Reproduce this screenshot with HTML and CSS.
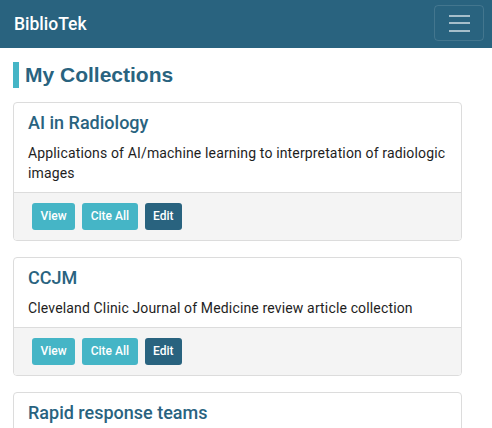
FILE: index.html
```html
<!DOCTYPE html>
<html>
<head>
<meta charset="utf-8">
<link rel="stylesheet" href="styles.css">
</head>
<body>
<nav class="navbar">
  <span class="brand">BiblioTek</span>
  <button class="toggler" aria-label="menu"><span class="bar"></span><span class="bar"></span><span class="bar"></span></button>
</nav>
<main class="container">
  <h1 class="page-title">My Collections</h1>
  <section class="card">
    <div class="card-body">
      <h2 class="card-title">AI in Radiology</h2>
      <p class="card-text">Applications of AI/machine learning to interpretation of radiologic images</p>
    </div>
    <div class="card-footer">
      <span class="btn btn-info">View</span>
      <span class="btn btn-info">Cite All</span>
      <span class="btn btn-dark">Edit</span>
    </div>
  </section>
  <section class="card">
    <div class="card-body">
      <h2 class="card-title">CCJM</h2>
      <p class="card-text">Cleveland Clinic Journal of Medicine review article collection</p>
    </div>
    <div class="card-footer">
      <span class="btn btn-info">View</span>
      <span class="btn btn-info">Cite All</span>
      <span class="btn btn-dark">Edit</span>
    </div>
  </section>
  <section class="card">
    <div class="card-body">
      <h2 class="card-title">Rapid response teams</h2>
      <p class="card-text">Rapid response team literature</p>
    </div>
  </section>
</main>
</body>
</html>
```
FILE: styles.css
```css
* { box-sizing: border-box; }
html, body { margin: 0; padding: 0; }
body {
  font-family: Roboto, "Liberation Sans", Arial, sans-serif;
  background: #fff;
  color: #222;
  width: 492px;
  height: 428px;
  overflow: hidden;
}
.navbar {
  height: 48px;
  background: #29637f;
  display: flex;
  align-items: center;
  justify-content: space-between;
  padding: 0 8px 0 14px;
}
.brand {
  color: #fff;
  font-size: 17.5px;
  font-weight: 500;
  line-height: 22px;
  margin-top: -1px;
}
.toggler {
  width: 50px;
  height: 36px;
  margin-top: -2px;
  border: 1px solid rgba(255,255,255,0.12);
  border-radius: 4px;
  background: transparent;
  display: flex;
  flex-direction: column;
  align-items: center;
  justify-content: center;
  gap: 5.5px;
  padding: 0;
}
.toggler .bar {
  display: block;
  width: 21px;
  height: 2px;
  background: #a6bfcb;
}
.container {
  padding: 14px 30px 0 13px;
}
.page-title {
  margin: 0 0 14px;
  font-family: "Liberation Sans", Arial, Helvetica, sans-serif;
  font-size: 21px;
  font-weight: 700;
  line-height: 26px;
  color: #29637f;
  border-left: 6px solid #45b5c6;
  padding-left: 6px;
}
.card {
  border: 1px solid #dcdcdc;
  border-radius: 4px;
  margin-bottom: 16px;
  overflow: hidden;
}
.card-body {
  padding: 9px 14px 9px;
}
.card-title {
  margin: 0 0 10px;
  font-size: 18px;
  font-weight: 500;
  line-height: 21px;
  color: #29637f;
}
.card-text {
  margin: 0;
  font-size: 14px;
  line-height: 20px;
  letter-spacing: 0.15px;
  color: #1e1e1e;
}
.card-footer {
  background: #f4f4f4;
  border-top: 1px solid #dcdcdc;
  padding: 10px 18px 10px;
  display: flex;
  gap: 7px;
}
.btn {
  display: inline-block;
  font-size: 12px;
  font-weight: 500;
  line-height: 27px;
  height: 27px;
  padding: 0 8.5px;
  border-radius: 3px;
  color: #fff;
}
.btn-info { background: #45b5c6; }
.btn-dark { background: #29637f; }
```
